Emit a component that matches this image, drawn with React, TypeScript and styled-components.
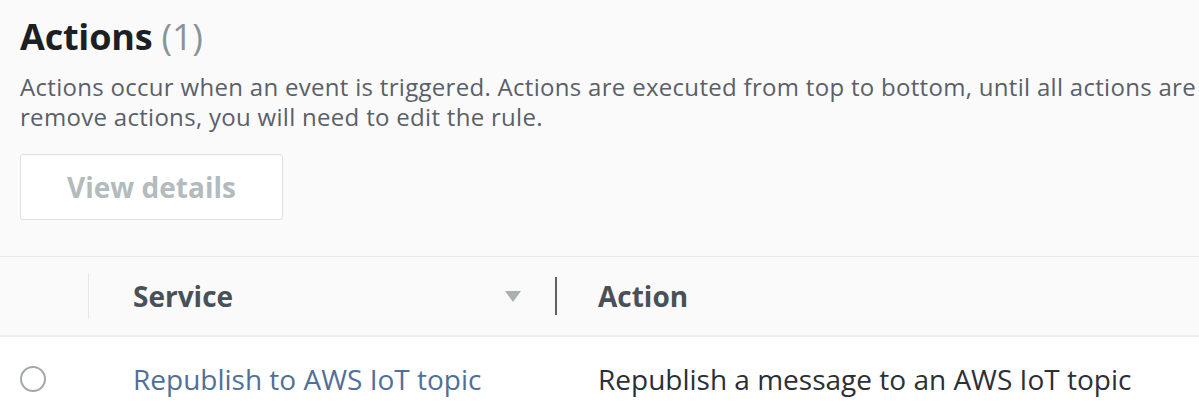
import styled, { createGlobalStyle } from 'styled-components';

const Global = createGlobalStyle`
  html, body {
    margin: 0;
    padding: 0;
    background: #fafafa;
    overflow: hidden;
  }
  body {
    font-family: "Open Sans", "Noto Sans", sans-serif;
  }
`;

const Page = styled.div`
  width: 1199px;
  height: 415px;
  overflow: hidden;
  background: #fafafa;
`;

const Head = styled.div`
  padding: 14px 0 0 20px;
`;

const Title = styled.h2`
  margin: 0;
  font-size: 36px;
  line-height: 46px;
  font-weight: 700;
  color: #1c1f24;
  letter-spacing: -0.2px;
`;

const Count = styled.span`
  font-weight: 400;
  color: #8a9496;
`;

const Desc = styled.p`
  margin: 12px 0 0;
  font-size: 24px;
  line-height: 30px;
  letter-spacing: 0.3px;
  color: #5a6068;
  white-space: nowrap;
`;

const Button = styled.button`
  margin-top: 22px;
  width: 263px;
  height: 66px;
  border: 1px solid #dde0e0;
  border-radius: 3px;
  background: #fff;
  font-family: inherit;
  font-size: 28px;
  font-weight: 700;
  color: #b3bbbc;
`;

const Table = styled.div`
  margin-top: 36px;
`;

const Row = styled.div<{ $cols: string; $head?: boolean }>`
  display: grid;
  grid-template-columns: ${p => p.$cols};
  align-items: center;
  height: ${p => (p.$head ? '78px' : '84px')};
  background: ${p => (p.$head ? '#fafafa' : '#fff')};
  border-top: ${p => (p.$head ? '1px solid #e8eaea' : 'none')};
  border-bottom: ${p => (p.$head ? '2px solid #eceeee' : 'none')};
`;

const HeadCell = styled.div<{ $pad: number; $divider?: 'light' | 'dark' }>`
  display: flex;
  align-items: center;
  height: ${p => (p.$divider === 'dark' ? 38 : 46)}px;
  padding-left: ${p => p.$pad}px;
  font-size: 28px;
  font-weight: 700;
  color: #4a5058;
  border-left: ${p =>
    p.$divider === 'dark' ? '2px solid #5c6168' : p.$divider === 'light' ? '1px solid #e6e8e8' : 'none'};
`;

const Sort = styled.span`
  margin-left: auto;
  margin-right: 34px;
  width: 0;
  height: 0;
  border-left: 8px solid transparent;
  border-right: 8px solid transparent;
  border-top: 11px solid #a9b0b2;
`;

const Cell = styled.div<{ $link?: boolean }>`
  font-size: 28px;
  color: ${p => (p.$link ? '#50709a' : '#2c3036')};
  white-space: nowrap;
`;

const Radio = styled.span`
  justify-self: start;
  margin-left: 20px;
  width: 22px;
  height: 22px;
  border: 2px solid #a3a8ab;
  border-radius: 50%;
  background: #fff;
`;

export default function App() {
  return (
    <Page>
      <Global />
      <Head>
        <Title>
          Actions <Count>(1)</Count>
        </Title>
        <Desc>
          Actions occur when an event is triggered. Actions are executed from top to bottom, until all actions are completed. To add or
          <br />
          remove actions, you will need to edit the rule.
        </Desc>
        <Button disabled>View details</Button>
      </Head>
      <Table>
        <Row $head $cols="88px 467px 1fr">
          <HeadCell $pad={0} />
          <HeadCell $pad={44} $divider="light">
            Service
            <Sort />
          </HeadCell>
          <HeadCell $pad={41} $divider="dark">
            Action
          </HeadCell>
        </Row>
        <Row $cols="133px 465px 1fr">
          <Radio />
          <Cell $link>Republish to AWS IoT topic</Cell>
          <Cell>Republish a message to an AWS IoT topic</Cell>
        </Row>
      </Table>
    </Page>
  );
}
